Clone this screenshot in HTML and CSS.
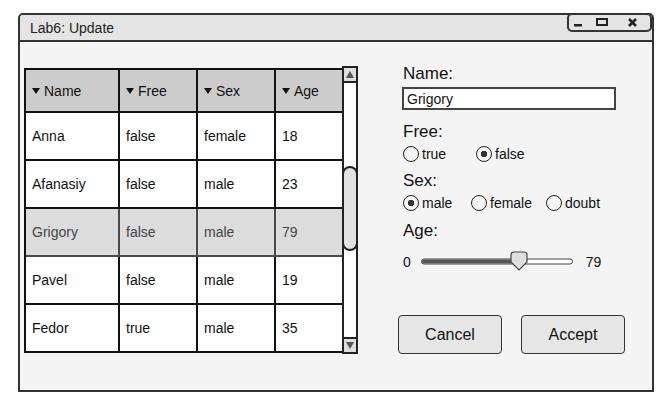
FILE: index.html
```html
<!DOCTYPE html>
<html lang="en">
<head>
    <meta charset="UTF-8">
    <meta name="viewport" content="width=device-width, initial-scale=1.0">
    <title>Lab6: Update</title>
    <link rel="stylesheet" href="styles.css">
</head>
<body>
    <div class="window">
        <div class="titlebar">
            <span class="title">Lab6: Update</span>
            <div class="controls">
                <svg width="81" height="15" viewBox="0 0 81 15">
                    <rect x="5" y="9" width="8" height="2.5" fill="#222"/>
                    <rect x="28" y="4" width="10" height="6" fill="none" stroke="#222" stroke-width="2"/>
                    <path d="M60 4 L67 11 M67 4 L60 11" stroke="#222" stroke-width="2.6"/>
                </svg>
            </div>
        </div>

        <div class="content">
            <!-- Table with its scrollbar -->
            <div class="list">
                <div class="grid">
                    <div class="row head">
                        <div class="cell"><span class="sort"></span>Name</div>
                        <div class="cell"><span class="sort"></span>Free</div>
                        <div class="cell"><span class="sort"></span>Sex</div>
                        <div class="cell"><span class="sort"></span>Age</div>
                    </div>
                    <div class="row">
                        <div class="cell">Anna</div>
                        <div class="cell">false</div>
                        <div class="cell">female</div>
                        <div class="cell">18</div>
                    </div>
                    <div class="row">
                        <div class="cell">Afanasiy</div>
                        <div class="cell">false</div>
                        <div class="cell">male</div>
                        <div class="cell">23</div>
                    </div>
                    <div class="row selected">
                        <div class="cell">Grigory</div>
                        <div class="cell">false</div>
                        <div class="cell">male</div>
                        <div class="cell">79</div>
                    </div>
                    <div class="row">
                        <div class="cell">Pavel</div>
                        <div class="cell">false</div>
                        <div class="cell">male</div>
                        <div class="cell">19</div>
                    </div>
                    <div class="row">
                        <div class="cell">Fedor</div>
                        <div class="cell">true</div>
                        <div class="cell">male</div>
                        <div class="cell">35</div>
                    </div>
                </div>
                <div class="scrollbar">
                    <div class="scroll-btn up"></div>
                    <div class="thumb"></div>
                    <div class="scroll-btn down"></div>
                </div>
            </div>

            <!-- Edit form -->
            <form class="editor">
                <label class="label" for="name">Name:</label>
                <input id="name" class="text-input" type="text" value="Grigory">

                <div class="label gap-free">Free:</div>
                <div class="choices free">
                    <span class="radio">true</span>
                    <span class="radio checked">false</span>
                </div>

                <div class="label gap-sex">Sex:</div>
                <div class="choices sex">
                    <span class="radio checked">male</span>
                    <span class="radio">female</span>
                    <span class="radio">doubt</span>
                </div>

                <div class="label gap-age">Age:</div>
                <div class="slider">
                    <span class="min">0</span>
                    <svg width="152" height="21" viewBox="0 0 152 21">
                        <rect x="0.5" y="8" width="151" height="5" rx="2.5" fill="#fff" stroke="#444"/>
                        <rect x="1" y="8.5" width="92" height="4" rx="2" fill="#555"/>
                        <path d="M90 4 Q90 1 93 1 H103 Q106 1 106 4 V11 L98 19 L90 11 Z" fill="#dedede" stroke="#444" stroke-width="1.2"/>
                    </svg>
                    <span class="max">79</span>
                </div>

                <div class="actions">
                    <button type="button" class="btn">Cancel</button>
                    <button type="button" class="btn">Accept</button>
                </div>
            </form>
        </div>
    </div>
</body>
</html>
```

FILE: styles.css
```css
* {
    margin: 0;
    padding: 0;
    box-sizing: border-box;
}

body {
    font-family: "Liberation Sans", Arial, sans-serif;
    font-size: 14px;
    color: #111;
    background: #fff;
}

/* Window frame */
.window {
    width: 636px;
    height: 379px;
    margin: 13px 0 0 18px;
    border: 2px solid #333;
    border-radius: 5px 5px 0 0;
    background: #f4f4f4;
    display: flex;
    flex-direction: column;
}

.titlebar {
    height: 27px;
    padding-left: 10px;
    background: #e4e4e4;
    border-bottom: 2px solid #333;
    border-radius: 3px 3px 0 0;
    display: flex;
    align-items: center;
    justify-content: space-between;
}

.title {
    color: #222;
}

.controls {
    align-self: flex-start;
    width: 85px;
    height: 19px;
    margin-top: -2px;
    border: 2px solid #333;
    border-radius: 5px;
    display: flex;
    align-items: center;
}

.content {
    display: flex;
    align-items: flex-start;
    padding: 22px 0 0 4px;
}

/* Table */
.list {
    display: flex;
    align-items: flex-start;
}

.grid {
    width: 320px;
    margin-top: 4px;
    border-left: 2px solid #111;
    border-top: 2px solid #111;
}

.row {
    display: grid;
    grid-template-columns: 94px 78px 78px 68px;
    height: 48px;
}

.row.head {
    height: 43px;
}

.cell {
    display: flex;
    align-items: center;
    padding-left: 6px;
    background: #fff;
    border-right: 2px solid #111;
    border-bottom: 2px solid #111;
}

.head .cell {
    background: #ccc;
}

.selected .cell {
    background: #dcdcdc;
    color: #444;
    border-color: #4a4a4a;
}

.sort {
    width: 0;
    height: 0;
    margin-right: 4px;
    border-left: 4px solid transparent;
    border-right: 4px solid transparent;
    border-top: 6px solid #111;
}

.scrollbar {
    width: 16px;
    height: 288px;
    margin: 2px 0 0 -2px;
    border: 2px solid #222;
    background: #fff;
    display: flex;
    flex-direction: column;
}

.scroll-btn {
    height: 15px;
    background: #ddd;
    display: flex;
    align-items: center;
    justify-content: center;
}

.scroll-btn::after {
    content: "";
    border-left: 4px solid transparent;
    border-right: 4px solid transparent;
}

.up {
    border-bottom: 2px solid #222;
}

.up::after {
    border-bottom: 7px solid #555;
}

.down {
    margin-top: auto;
    border-top: 2px solid #222;
}

.down::after {
    border-top: 7px solid #555;
}

.thumb {
    height: 85px;
    margin: 83px -2px 0;
    border: 2px solid #222;
    border-radius: 8px;
    background: #e2e2e2;
}

/* Form */
.editor {
    width: 224px;
    margin-left: 44px;
    display: flex;
    flex-direction: column;
}

.label {
    font-size: 17px;
    line-height: 20px;
    margin-left: 1px;
}

.gap-free { margin-top: 12px; }
.gap-sex { margin-top: 8px; }
.gap-age { margin-top: 9px; }

.text-input {
    width: 214px;
    height: 23px;
    margin-top: 3px;
    padding-left: 3px;
    border: 2px solid #444;
    background: #fff;
    font: 14px "Liberation Sans", Arial, sans-serif;
    color: #111;
}

.choices {
    display: grid;
    height: 18px;
    margin: 3px 0 0 1px;
}

.choices.free {
    grid-template-columns: 73px auto;
}

.choices.sex {
    grid-template-columns: 68px 75px auto;
}

.radio {
    display: flex;
    align-items: center;
    gap: 3px;
}

.radio::before {
    content: "";
    width: 14px;
    height: 14px;
    border: 1.5px solid #222;
    border-radius: 50%;
}

.radio.checked::before {
    background: radial-gradient(circle, #333 0 3px, transparent 3.5px);
}

.slider {
    display: flex;
    align-items: center;
    height: 21px;
    margin: 10px 0 0 1px;
}

.slider .min {
    margin-right: 10px;
}

.slider .max {
    margin-left: 13px;
}

.actions {
    display: flex;
    gap: 19px;
    margin: 43px 0 0 -4px;
}

.btn {
    width: 104px;
    height: 39px;
    font: 16px "Liberation Sans", Arial, sans-serif;
    color: #111;
    background: #e6e6e6;
    border: 1px solid #333;
    border-radius: 4px;
}
```
